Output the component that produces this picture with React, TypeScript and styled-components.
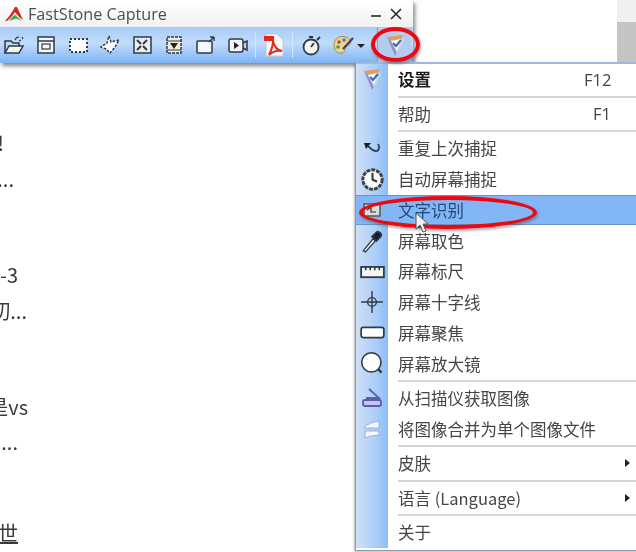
import styled, { createGlobalStyle } from "styled-components";
import type { ReactNode } from "react";

const GlobalStyle = createGlobalStyle`
  html, body {
    margin: 0;
    padding: 0;
    background: #fff;
  }
  body {
    font-family: "Noto Sans CJK SC", "Noto Sans", sans-serif;
  }
`;

const Desktop = styled.div`
  position: relative;
  width: 636px;
  height: 552px;
  overflow: hidden;
  background: #fff;
  filter: blur(0.65px);
`;

/* the page behind the capture window, only its right edge shows */
const PageBehind = styled.div`
  display: flex;
  flex-direction: column;
  padding-top: 126px;
  width: 40px;
`;

const ClippedLine = styled.div<{ $w: number; $h: number; $under?: boolean }>`
  width: ${(p) => p.$w}px;
  height: ${(p) => p.$h}px;
  line-height: ${(p) => p.$h}px;
  display: flex;
  justify-content: flex-end;
  overflow: hidden;
  white-space: nowrap;
  font-size: 20px;
  color: #3a3a3a;
  text-decoration: ${(p) => (p.$under ? "underline" : "none")};
`;

const ScrollEdge = styled.div`
  position: absolute;
  top: 0;
  right: 0;
  width: 19px;
  height: 62px;
  background: linear-gradient(#f0f0f0 22px, #c4c4c4 22px);
`;

const CaptureWindow = styled.div`
  position: absolute;
  left: 0;
  top: 0;
  width: 413px;
  height: 63px;
  background: #f6f6f6;
  box-shadow: 2px 3px 4px rgba(70, 70, 70, 0.65);
  display: flex;
  flex-direction: column;
`;

const TitleBar = styled.div`
  height: 27px;
  display: flex;
  align-items: center;
  padding: 0 7px 0 4px;
  background: linear-gradient(#fff, #f1f1f1);
`;

const AppTitle = styled.span`
  margin-left: 4px;
  flex: 1;
  font-family: "Open Sans", sans-serif;
  font-size: 16.2px;
  color: #4a4f55;
`;

const WinButton = styled.span`
  width: 20px;
  display: flex;
  justify-content: center;
  color: #333;
`;

const Toolbar = styled.div`
  flex: 1;
  display: flex;
  align-items: center;
  background: linear-gradient(#a6cbf6 0%, #c2dcfb 45%, #9cc6f8 75%, #7fb4f4 100%);

  & > :first-child {
    margin-left: -2px;
  }
`;

const ToolSlot = styled.div<{ $w?: number }>`
  width: ${(p) => p.$w ?? 32}px;
  height: 26px;
  display: flex;
  align-items: center;
  justify-content: center;
  flex-shrink: 0;
`;

const ToolDivider = styled.div`
  width: 1px;
  height: 26px;
  margin: 0 1px;
  background: #d5e6fb;
  flex-shrink: 0;
`;

const SelectedTool = styled(ToolSlot)`
  background: #b3cdee;
  height: 36px;
  margin-left: 12px;
  border-left: 1px solid #7ea4d6;
`;

const DropCaret = styled.span`
  width: 0;
  height: 0;
  border-left: 4px solid transparent;
  border-right: 4px solid transparent;
  border-top: 4px solid #222;
  margin: 2px 0 0 -2px;
`;

const Menu = styled.div`
  position: absolute;
  left: 355px;
  top: 62px;
  width: 300px;
  padding: 0 0 2px;
  background: #fff;
  border-left: 1px solid #8c9bb0;
  border-top: 2px solid #9fb9da;
  border-bottom: 1px solid #8c9bb0;
  box-shadow: -1px 1px 2px rgba(80, 80, 80, 0.4);
`;

const Row = styled.div<{ $active?: boolean }>`
  height: 30.75px;
  display: flex;
  align-items: center;
  background: ${(p) => (p.$active ? "#82b6f6" : "transparent")};
  box-shadow: ${(p) => (p.$active ? "inset 0 1px 0 #6c94c8, inset 0 -1px 0 #6c94c8" : "none")};
  color: ${(p) => (p.$active ? "#234a78" : "#454545")};
  font-size: 16.5px;
`;

const Gutter = styled.div<{ $active?: boolean }>`
  width: 32px;
  align-self: stretch;
  display: flex;
  align-items: center;
  justify-content: center;
  flex-shrink: 0;
  background: ${(p) =>
    p.$active ? "transparent" : "linear-gradient(90deg, #cfdff7, #b0d0f8 55%, #8dbdf8)"};
`;

const Label = styled.span<{ $bold?: boolean }>`
  margin-left: 10px;
  width: 186px;
  white-space: nowrap;
  font-weight: ${(p) => (p.$bold ? 700 : 400)};
  color: ${(p) => (p.$bold ? "#1c1c1c" : "inherit")};
`;

const Shortcut = styled.span`
  width: 27px;
  text-align: right;
  font-family: "Open Sans", sans-serif;
  font-size: 16.5px;
`;

const SubArrow = styled.span`
  width: 0;
  height: 0;
  margin-left: 41px;
  border-top: 4px solid transparent;
  border-bottom: 4px solid transparent;
  border-left: 5px solid #222;
`;

const SepRow = styled.div`
  height: 3.75px;
  display: flex;
  align-items: center;
`;

const SepGutter = styled.div`
  width: 32px;
  height: 100%;
  background: linear-gradient(90deg, #cfdff7, #b0d0f8 55%, #8dbdf8);
`;

const SepLine = styled.div`
  flex: 1;
  height: 2px;
  margin-left: 10px;
  background: #d6d6d6;
`;

const RedRing = styled.div<{ $x: number; $y: number; $w: number; $h: number }>`
  position: absolute;
  left: ${(p) => p.$x}px;
  top: ${(p) => p.$y}px;
  width: ${(p) => p.$w}px;
  height: ${(p) => p.$h}px;
  box-sizing: border-box;
  border: 4px solid #ee0610;
  border-radius: 50%;
  box-shadow: 1px 2px 3px rgba(60, 60, 60, 0.45);
`;

const Pointer = styled.svg`
  position: absolute;
  left: 415px;
  top: 212px;
`;

const Icon = ({ size = 22, children }: { size?: number; children: ReactNode }) => (
  <svg width={size} height={size} viewBox="0 0 22 22" fill="none" stroke="#2f3a46" strokeWidth="1.5">
    {children}
  </svg>
);

const AppLogo = () => (
  <svg width="20" height="16" viewBox="0 0 20 16">
    <path d="M1 15 C5 11 8 6 11 1 L13 2 C10 8 7 12 3 15 Z" fill="#e2231a" />
    <path d="M11 1 L13 1 L19 14 L15 11 L10 5 Z" fill="#e2231a" />
    <path d="M5 15 C7 12 9 10 11 9 L18 15 L12 12.5 Z" fill="#22b14c" />
  </svg>
);

const SettingsMark = ({ size = 26 }: { size?: number }) => (
  <svg width={size} height={size} viewBox="0 0 26 26" fill="none">
    <path d="M5 5 L21 3 L19 7 L9 9 Z" fill="#e69a5c" />
    <path d="M5 5 L9 9 L15 21 L13 24 Z" fill="#9a90c8" />
    <path d="M13 24 L22 8 L19 7 L15 19 Z" fill="#d8d4ee" />
    <path d="M9 9 L19 7 L15 19 Z" fill="#f6f8fb" />
    <path d="M11 11 L14 14 L19 8" stroke="#2f6ea8" strokeWidth="2" />
  </svg>
);

const toolIcons: ReactNode[] = [
  <Icon key="open">
    <path d="M2 19 V7 H8 L10 9 H16 V12" />
    <path d="M2 19 L6 12 H20 L16 19 Z" fill="#f5f5f0" />
    <path d="M12 6 C13 3 15 3 16 3 M19 3 L20 5 M16 7 L18 6" strokeWidth="1.2" />
  </Icon>,
  <Icon key="window">
    <rect x="3" y="3" width="16" height="16" fill="#f4f7fb" />
    <path d="M3 7 H19" />
    <rect x="7" y="10" width="8" height="5" strokeWidth="1.2" />
  </Icon>,
  <Icon key="rect">
    <rect x="3" y="5" width="17" height="13" fill="#fff" strokeDasharray="2 2" strokeWidth="2" />
  </Icon>,
  <Icon key="free">
    <path d="M10 2 L12 8 L20 6 L16 13 L11 19 L7 15 L2 13 L8 9 Z" fill="#fff" strokeDasharray="2.5 1.5" />
  </Icon>,
  <Icon key="full">
    <rect x="3" y="3" width="17" height="16" fill="#e8edf2" />
    <path d="M6 6 L10 10 M16 6 L12 10 M6 16 L10 12 M16 16 L12 12" strokeWidth="2" />
  </Icon>,
  <Icon key="scroll">
    <rect x="4" y="3" width="14" height="16" fill="#f0ece4" strokeDasharray="3 1" />
    <path d="M7 9 H15 L11 15 Z" fill="#222" stroke="none" />
    <path d="M4 7 H18 M4 16 H18" strokeWidth="1" />
  </Icon>,
  <Icon key="send">
    <rect x="2" y="7" width="15" height="12" rx="1" fill="#f4f7fb" />
    <path d="M14 8 L19 3 M19 3 h-4 M19 3 v4" strokeWidth="1.4" />
  </Icon>,
  <Icon key="video">
    <rect x="2" y="5" width="14" height="13" rx="2" fill="#f4f4f4" />
    <path d="M7 8 L12 11.5 L7 15 Z" fill="#222" stroke="none" />
    <path d="M16 9 L20 7 V16 L16 14" />
  </Icon>,
];

const PdfIcon = () => (
  <svg width="24" height="26" viewBox="0 0 24 26" fill="none">
    <path d="M4 2 H15 L21 8 V24 H4 Z" fill="#f7f7f7" stroke="#c9c9c9" />
    <path d="M2 4 H12 V9 H2 Z" fill="#e02a20" />
    <path d="M7 23 C10 17 11 12 11 9 C12 14 15 18 20 19 C15 18 10 20 7 23 Z" stroke="#e02a20" strokeWidth="2" />
  </svg>
);

const TimerIcon = () => (
  <Icon>
    <circle cx="10" cy="13" r="7.5" fill="#f6f6f4" strokeWidth="1.8" />
    <path d="M10 13 L13 9 M8 3 H12 M16 6 L19 3" strokeWidth="1.8" />
  </Icon>
);

const PaletteIcon = () => (
  <svg width="24" height="24" viewBox="0 0 24 24">
    <path d="M2 12 C2 5 9 2 14 4 C20 6 20 12 15 13 C12 14 14 19 10 20 C6 21 2 18 2 12 Z" fill="#e9d58b" stroke="#a2893f" />
    <circle cx="7" cy="9" r="1.8" fill="#d8392b" />
    <circle cx="12" cy="7" r="1.8" fill="#3b7dd8" />
    <circle cx="6" cy="14" r="1.8" fill="#38a34a" />
    <path d="M11 16 L21 5" stroke="#3c3c6c" strokeWidth="2" />
  </svg>
);

const RepeatIcon = () => (
  <Icon>
    <path d="M3 6 L10 6 L5 12 Z" fill="#1e1e1e" stroke="none" />
    <path d="M7 9 C10 12 13 15 16 14 C18 13 19 10 17 7" strokeWidth="1.8" stroke="#24415f" />
  </Icon>
);

const ClockIcon = () => (
  <Icon size={25}>
    <circle cx="11" cy="11" r="8.5" fill="#fbfbf8" strokeWidth="2.6" strokeDasharray="3.4 0.9" stroke="#3c4048" />
    <path d="M11 5 V11 L15 13" strokeWidth="1.8" />
  </Icon>
);

const OcrIcon = () => (
  <Icon>
    <rect x="3" y="5" width="16" height="12" fill="#d9dbdc" stroke="#555" />
    <path d="M6 11 L10 8 V13 H15" stroke="#333" strokeWidth="1.2" />
  </Icon>
);

const PickerIcon = () => (
  <Icon size={24}>
    <path d="M3 20 L12 9 L14 11 L5 21 Z" fill="#fff" strokeWidth="1.2" />
    <path d="M11 7 L15 3 C17 1 21 5 19 7 L15 11 Z" fill="#1b1b1b" />
  </Icon>
);

const RulerIcon = () => (
  <Icon size={25}>
    <rect x="1" y="7" width="20" height="9" fill="#f6f6f6" strokeWidth="1.6" />
    <path d="M5 7 V10 M9 7 V10 M13 7 V10 M17 7 V10" strokeWidth="1.4" />
  </Icon>
);

const CrossIcon = () => (
  <Icon size={24}>
    <circle cx="11" cy="11" r="4" strokeWidth="1.3" />
    <path d="M11 1 V21 M1 11 H21" strokeWidth="1.3" />
  </Icon>
);

const FocusIcon = () => (
  <Icon size={25}>
    <rect x="1" y="6.5" width="20" height="9" rx="2" fill="#fff" strokeWidth="1.5" />
  </Icon>
);

const LensIcon = () => (
  <Icon size={25}>
    <circle cx="10" cy="10" r="8.5" fill="#fff" strokeWidth="1.4" />
    <path d="M16 16 L19 19" strokeWidth="2.2" />
  </Icon>
);

const ScannerIcon = () => (
  <svg width="24" height="24" viewBox="0 0 24 24" fill="none" stroke="#5a5cb0" strokeWidth="1.8">
    <path d="M9 3 L19 12 H6" />
    <rect x="3" y="14" width="18" height="6" rx="2" fill="#c5c5ee" />
  </svg>
);

const MergeIcon = () => (
  <svg width="22" height="22" viewBox="0 0 22 22">
    <path d="M4 8 L10 5 L18 3 V10 H4 Z" fill="#f4f8fe" stroke="#8ea3c7" strokeWidth="0.8" />
    <path d="M4 13 H18 V17 L10 18 L4 20 Z" fill="#f4f8fe" stroke="#8ea3c7" strokeWidth="0.8" />
  </svg>
);

const Sep = () => (
  <SepRow>
    <SepGutter />
    <SepLine />
  </SepRow>
);

interface IMenuItem {
  label: string;
  icon?: ReactNode;
  shortcut?: string;
  bold?: boolean;
  active?: boolean;
  sub?: boolean;
}

const Item = ({ label, icon, shortcut, bold, active, sub }: IMenuItem) => (
  <Row $active={active}>
    <Gutter $active={active}>{icon}</Gutter>
    <Label $bold={bold}>{label}</Label>
    {shortcut && <Shortcut>{shortcut}</Shortcut>}
    {sub && <SubArrow />}
  </Row>
);

const App = () => {
  return (
    <Desktop>
      <GlobalStyle />
      <PageBehind>
        <ClippedLine $w={4} $h={34}>!</ClippedLine>
        <ClippedLine $w={14} $h={38}>...</ClippedLine>
        <ClippedLine $w={17} $h={58} />
        <ClippedLine $w={18} $h={38}>-3</ClippedLine>
        <ClippedLine $w={27} $h={34}>切...</ClippedLine>
        <ClippedLine $w={20} $h={60} />
        <ClippedLine $w={28} $h={38}>是vs</ClippedLine>
        <ClippedLine $w={18} $h={32}>...</ClippedLine>
        <ClippedLine $w={18} $h={57} />
        <ClippedLine $w={18} $h={36} $under>世</ClippedLine>
      </PageBehind>
      <ScrollEdge />

      <CaptureWindow>
        <TitleBar>
          <AppLogo />
          <AppTitle>FastStone Capture</AppTitle>
          <WinButton>
            <svg width="12" height="12" viewBox="0 0 12 12">
              <rect x="1" y="7" width="10" height="2" fill="#555" />
            </svg>
          </WinButton>
          <WinButton>
            <svg width="12" height="12" viewBox="0 0 12 12" stroke="#2a2a2a" strokeWidth="1.6">
              <path d="M1 1 L11 11 M11 1 L1 11" />
            </svg>
          </WinButton>
        </TitleBar>
        <Toolbar>
          {toolIcons.map((icon, i) => (
            <ToolSlot key={i}>{icon}</ToolSlot>
          ))}
          <ToolDivider />
          <ToolSlot $w={34}><PdfIcon /></ToolSlot>
          <ToolDivider />
          <ToolSlot $w={35}><TimerIcon /></ToolSlot>
          <ToolSlot $w={30}><PaletteIcon /></ToolSlot>
          <DropCaret />
          <SelectedTool $w={33}><SettingsMark /></SelectedTool>
        </Toolbar>
      </CaptureWindow>

      <Menu>
        <Item label="设置" bold shortcut="F12" icon={<SettingsMark />} />
        <Sep />
        <Item label="帮助" shortcut="F1" />
        <Sep />
        <Item label="重复上次捕捉" icon={<RepeatIcon />} />
        <Item label="自动屏幕捕捉" icon={<ClockIcon />} />
        <Item label="文字识别" active icon={<OcrIcon />} />
        <Item label="屏幕取色" icon={<PickerIcon />} />
        <Item label="屏幕标尺" icon={<RulerIcon />} />
        <Item label="屏幕十字线" icon={<CrossIcon />} />
        <Item label="屏幕聚焦" icon={<FocusIcon />} />
        <Item label="屏幕放大镜" icon={<LensIcon />} />
        <Sep />
        <Item label="从扫描仪获取图像" icon={<ScannerIcon />} />
        <Item label="将图像合并为单个图像文件" icon={<MergeIcon />} />
        <Sep />
        <Item label="皮肤" sub />
        <Sep />
        <Item label="语言 (Language)" sub />
        <Sep />
        <Item label="关于" />
      </Menu>

      <RedRing $x={371} $y={27} $w={49} $h={35} />
      <RedRing $x={359} $y={196} $w={178} $h={33} />
      <Pointer width="16" height="22" viewBox="0 0 16 22">
        <path d="M1 1 V17 L5 13 L8 20 L11 19 L8 12 H13 Z" fill="#f2f2f2" stroke="#555" />
      </Pointer>
    </Desktop>
  );
};

export default App;
